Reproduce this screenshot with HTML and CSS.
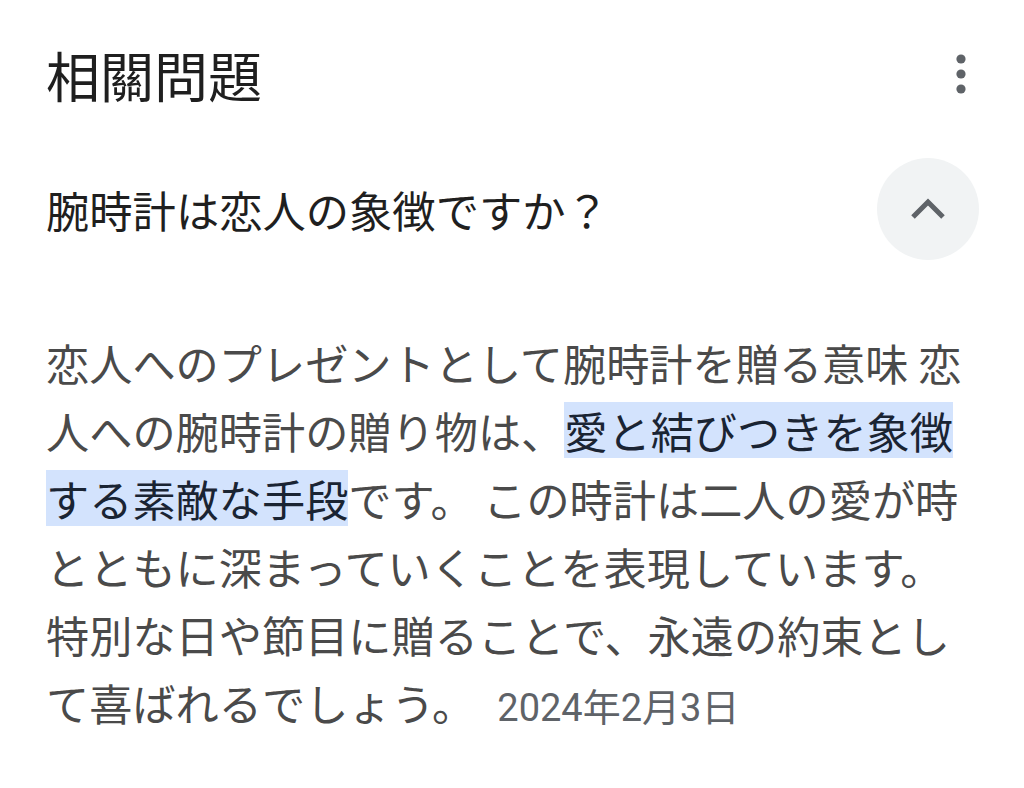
FILE: index.html
```html
<!DOCTYPE html>
<html>

<head>
    <title>相關問題</title>
    <link rel="stylesheet" href="styles.css">
</head>

<body>
    <div class="panel">
        <div class="heading">
            <h1>相關問題</h1>
            <div class="more">
                <svg width="12" height="40" viewBox="0 0 12 40">
                    <circle cx="6" cy="5" r="4.6" fill="#5f6368"/>
                    <circle cx="6" cy="20" r="4.6" fill="#5f6368"/>
                    <circle cx="6" cy="35" r="4.6" fill="#5f6368"/>
                </svg>
            </div>
        </div>

        <div class="question">
            <div class="question-text">腕時計は恋人の象徴ですか？</div>
            <div class="toggle">
                <svg width="36" height="22" viewBox="0 0 36 22">
                    <path d="M3 19 L18 4 L33 19" fill="none" stroke="#5f6368" stroke-width="5"/>
                </svg>
            </div>
        </div>

        <div class="answer">
            恋人へのプレゼントとして腕時計を贈る意味 恋人への腕時計の贈り物は、<span class="mark">愛と結びつきを象徴する素敵な手段</span>です。 この時計は二人の愛が時とともに深まっていくことを表現しています。特別な日や節目に贈ることで、永遠の約束として喜ばれるでしょう。<span class="date">2024年2月3日</span>
        </div>
    </div>
</body>

</html>
```

FILE: styles.css
```css
body {
    margin: 0;
    background: #ffffff;
    font-family: "Noto Sans CJK JP", sans-serif;
}

.panel {
    padding: 0 46px 0 46px;
}

.heading {
    display: flex;
    justify-content: space-between;
    align-items: center;
    height: 148px;
}

.heading h1 {
    margin: 0;
    font-family: "Noto Sans CJK TC", sans-serif;
    font-size: 54px;
    font-weight: 400;
    color: #1f1f1f;
}

.more {
    margin-right: 11px;
    display: flex;
}

.question {
    display: flex;
    justify-content: space-between;
    align-items: center;
    padding-top: 10px;
}

.question-text {
    font-size: 43.3px;
    color: #1f1f1f;
}

.toggle {
    width: 102px;
    height: 102px;
    border-radius: 50%;
    background: #f1f3f4;
    display: flex;
    justify-content: center;
    align-items: center;
    margin-right: -1px;
}

.answer {
    margin-top: 68px;
    width: 930px;
    font-size: 43.2px;
    line-height: 68px;
    color: #4a4a4a;
}

.mark {
    color: #1a2433;
    background: linear-gradient(#d3e3fd, #d3e3fd) center / 100% 56px no-repeat;
}

.date {
    font-family: Roboto, "Noto Sans CJK JP", sans-serif;
    font-size: 38px;
    color: #5f6368;
    margin-left: 22px;
}
```
